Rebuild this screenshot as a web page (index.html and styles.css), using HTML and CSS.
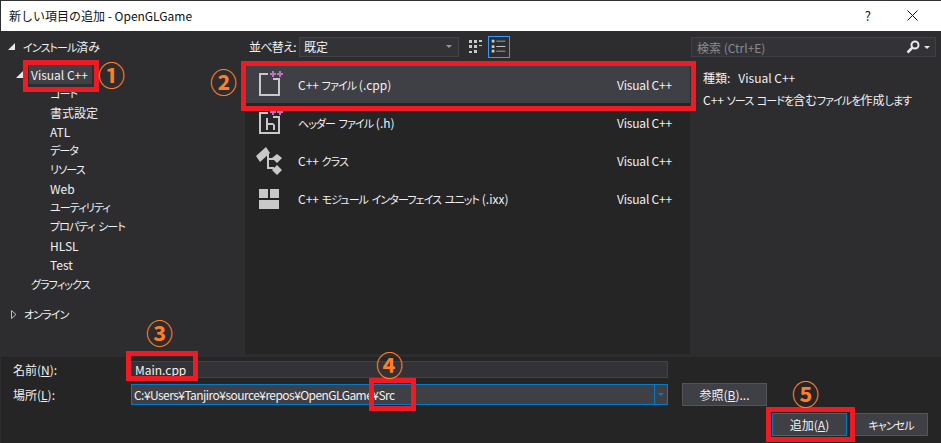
FILE: index.html
```html
<!DOCTYPE html>
<html lang="ja">
<head>
  <meta charset="UTF-8" />
  <title>新しい項目の追加 - OpenGLGame</title>
  <link rel="stylesheet" href="styles.css">
</head>
<body>
  <div class="dialog">
    <div class="titlebar">
      <span class="title">新しい項目の追加 - OpenGLGame</span>
      <span class="help">?</span>
      <svg class="close" width="11" height="11" viewBox="0 0 11 11"><path d="M.5.5l10 10M10.5.5l-10 10" stroke="#111" fill="none"/></svg>
    </div>

    <div class="main">
      <div class="tree">
        <div class="node top"><span class="tri open"></span><span><span class="kana">インストール</span>済み</span></div>
        <div class="node second"><span class="tri open small"></span><span class="picked">Visual C++</span></div>
        <ul class="leaves">
          <li class="kana">コード</li>
          <li>書式設定</li>
          <li>ATL</li>
          <li class="kana">データ</li>
          <li class="kana">リソース</li>
          <li>Web</li>
          <li class="kana">ユーティリティ</li>
          <li class="kana">プロパティ シート</li>
          <li>HLSL</li>
          <li>Test</li>
        </ul>
        <div class="node graphics kana">グラフィックス</div>
        <div class="node online">
          <svg class="shut" width="6" height="9" viewBox="0 0 6 9"><path d="M.5.5v8l4.500-4z" fill="none" stroke="#bbb"/></svg>
          <span class="kana">オンライン</span>
        </div>
      </div>

      <div class="center">
        <div class="sortbar">
          <label>並べ替え:</label>
          <div class="sortbox">既定<span class="drop"></span></div>
          <svg class="viewbtn" width="20" height="22" viewBox="0 0 20 22" fill="#c8c8c8">
            <path d="M3 4h3v3H3zM8 4h3v3H8zM13 4h3v2h-3zM3 9h3v3H3zM8 9h3v3H8zM13 9h3v1h-3zM3 15h3v2H3zM8 14h3v3H8z"/>
          </svg>
          <svg class="viewbtn on" width="22" height="22" viewBox="0 0 22 22" fill="#c8c8c8">
            <path d="M3 3h3v3H3zM8 4h10v1H8zM3 9h3v3H3zM8 10h10v1H8zM3 14h3v3H3zM8 15h10v1H8z"/>
          </svg>
        </div>
        <div class="list">
          <div class="row active">
            <svg class="ico" width="32" height="32" viewBox="0 0 32 32">
              <path d="M15 6H7v21h19V11h-6" fill="none" stroke="#c8c8c8" stroke-width="2"/>
              <path d="M17 6h6M20 3v6M24 6h6M27 3v6" stroke="#c070c0" stroke-width="2" fill="none"/>
            </svg>
            <span class="name">C++ <span class="kana">ファイル</span> (.cpp)</span><span class="kind">Visual C++</span>
          </div>
          <div class="row">
            <svg class="ico" width="32" height="32" viewBox="0 0 32 32">
              <path d="M15 7H7v20h19V11h-6" fill="none" stroke="#c8c8c8" stroke-width="2"/>
              <path d="M17 6h6M20 3v6M24 6h6M27 3v6" stroke="#c070c0" stroke-width="2" fill="none"/>
              <path d="M13 12h2v5h5l2 2v5h-2v-5h-5v5h-2z" fill="#c8c8c8"/>
            </svg>
            <span class="name"><span class="kana">ヘッダー ファイル</span> (.h)</span><span class="kind">Visual C++</span>
          </div>
          <div class="row">
            <svg class="ico" width="32" height="32" viewBox="0 0 32 32">
              <path d="M13 3l4 6-10 9-4-6z" fill="#c8c8c8"/>
              <path d="M14 10h2v4h5v2h-5v7h5v2h-7z" fill="#c8c8c8"/>
              <path d="M24 10l5 4-5 5-5-5zM24 21l5 5-5 5-5-5z" fill="#c8c8c8"/>
            </svg>
            <span class="name">C++ <span class="kana">クラス</span></span><span class="kind">Visual C++</span>
          </div>
          <div class="row">
            <svg class="ico" width="32" height="32" viewBox="0 0 32 32">
              <path d="M6 7h9v9H6zM17 7h9v9h-9zM6 18h20v9H6z" fill="#c8c8c8"/>
            </svg>
            <span class="name">C++ <span class="kana">モジュール インターフェイス ユニット</span> (.ixx)</span><span class="kind">Visual C++</span>
          </div>
        </div>
      </div>

      <div class="side">
        <div class="search">
          <span class="hint">検索 (Ctrl+E)</span>
          <svg width="14" height="14" viewBox="0 0 14 14"><circle cx="9" cy="5" r="3.500" fill="none" stroke="#e8e8e8" stroke-width="2"/><path d="M6.500 7.500L1.500 12.500" stroke="#e8e8e8" stroke-width="2.500"/></svg>
          <span class="drop light"></span>
        </div>
        <div class="info">
          <p><span class="infolabel">種類:</span>Visual C++</p>
          <p>C++ <span class="kana">ソース コードを</span>含む<span class="kana">ファイルを</span>作成<span class="kana">します</span></p>
        </div>
      </div>
    </div>

    <div class="form">
      <div class="fields">
        <div class="field">
          <label>名前(<u>N</u>):</label>
          <div class="input">Main.cpp</div>
        </div>
        <div class="field">
          <label>場所(<u>L</u>):</label>
          <div class="input focused"><span class="path">C:¥Users¥Tanjiro¥source¥repos¥OpenGLGame¥Src</span><span class="combo"><span class="drop blue"></span></span></div>
          <button class="btn browse">参照(<u>B</u>)...</button>
        </div>
      </div>
      <div class="actions">
        <button class="btn primary">追加(<u>A</u>)</button>
        <button class="btn"><span class="kana">キャンセル</span></button>
      </div>
    </div>

    <!-- red marks and numbers drawn over the screenshot -->
    <div class="mark m1"></div>
    <div class="mark m2"></div>
    <div class="mark m3"></div>
    <div class="mark m4"></div>
    <div class="mark m5"></div>
    <span class="num n1">①</span>
    <span class="num n2">②</span>
    <span class="num n3">③</span>
    <span class="num n4">④</span>
    <span class="num n5">⑤</span>
  </div>
</body>
</html>
```

FILE: styles.css
```css
* { margin: 0; padding: 0; box-sizing: border-box; }
html, body { height: 100%; overflow: hidden; }
body {
  font-family: "Noto Sans CJK JP", "Open Sans", sans-serif;
  font-size: 12px;
  font-feature-settings: "palt";
  color: #f1f1f1;
  background: #252526;
}
u { text-underline-offset: 1px; }
/* the screenshot's UI font has much narrower kana */
.kana { font-size: 11px; letter-spacing: -0.9px; word-spacing: 2px; }

.dialog {
  position: relative;
  width: 941px;
  height: 443px;
  display: flex;
  flex-direction: column;
  border-left: 1px solid #2d2d30;
}

.titlebar {
  height: 31px;
  flex: none;
  background: #fff;
  border-top: 1px solid #333;
  color: #111;
  display: flex;
  align-items: center;
  padding: 0 23px 2px 8px;
  font-feature-settings: normal;
}
.title { flex: 1; }
.help { margin-right: 36px; font-size: 13px; }

.main { display: flex; height: 326px; flex: none; background: #2d2d30; }

.tree { width: 244px; flex: none; padding-top: 4px; }
.node { display: flex; align-items: center; height: 22px; }
.top { padding-left: 7px; }
.second { padding-left: 15px; margin-top: 6px; }
.picked { background: #3f3f46; padding: 0 4px 0 2px; height: 19px; line-height: 19px; margin-left: 6px; }
.tri { width: 0; height: 0; flex: none; }
.tri.open { border-left: 7px solid transparent; border-bottom: 7px solid #e8e8e8; margin-right: 8px; }
.tri.small { margin-right: 0; }
.shut { margin-right: 7px; flex: none; }
.leaves { list-style: none; padding-left: 49px; }
.leaves li { height: 19px; line-height: 19px; }
.second + .leaves { margin-top: -1px; }
.graphics { padding-left: 30px; height: 19px; }
.online { padding-left: 10px; margin-top: 10px; }

.center { width: 445px; flex: none; display: flex; flex-direction: column; }
.sortbar { height: 31px; flex: none; display: flex; align-items: center; padding-left: 4px; }
.sortbar label { width: 50px; flex: none; white-space: nowrap; letter-spacing: -0.7px; }
.sortbox {
  width: 160px;
  height: 20px;
  line-height: 18px;
  padding-left: 4px;
  border: 1px solid #434346;
  background: #333337;
  display: flex;
  align-items: center;
  justify-content: space-between;
  padding-right: 6px;
  margin-right: 7px;
}
.drop { width: 0; height: 0; border-left: 3px solid transparent; border-right: 3px solid transparent; border-top: 3px solid #999; }
.viewbtn { margin-right: 2px; flex: none; }
.viewbtn.on { border: 1px solid #3399ff; }
.list { height: 292px; background: #252526; padding-top: 3px; }
.row { height: 38px; display: flex; align-items: center; padding-right: 18px; }
.row.active { background: #3f3f46; }
.ico { margin: 0 13px 0 8px; flex: none; }
.name { flex: 1; }
.kind { letter-spacing: -0.2px; }

.side { flex: 1; }
.search {
  height: 20px;
  margin: 6px 5px 5px 1px;
  background: #333337;
  border: 1px solid #3f3f46;
  display: flex;
  align-items: center;
  padding: 0 5px;
  gap: 4px;
}
.hint { flex: 1; color: #8a8a8a; }
.drop.light { border-top-color: #e8e8e8; }
.info { padding: 5px 0 0 13px; }
.info p { height: 22px; line-height: 22px; white-space: nowrap; }
.infolabel { margin-right: 8px; }

.form { flex: 1; position: relative; display: flex; flex-direction: column; padding: 4px 0 0 12px; }
.fields { display: flex; flex-direction: column; gap: 5px; }
.field { display: flex; align-items: center; }
.field label { width: 118px; flex: none; }
.input {
  width: 537px;
  height: 17px;
  line-height: 15px;
  background: #333337;
  border: 1px solid #434346;
  padding-left: 3px;
  position: relative;
}
.input.focused { height: 21px; line-height: 19px; border-color: #007acc; background: #3f3f46; padding-left: 2px; }
.path { letter-spacing: -0.55px; }
.combo { position: absolute; right: 0; top: 0; width: 13px; height: 19px; border-left: 1px solid #007acc; display: flex; align-items: center; justify-content: center; }
.drop.blue { border-top-color: #007acc; }

.btn {
  font: inherit;
  font-feature-settings: inherit;
  color: #f1f1f1;
  height: 23px;
  background: #3f3f46;
  border: 1px solid #555;
}
.browse { width: 85px; margin-left: 14px; }
.actions { display: flex; justify-content: flex-end; gap: 7px; padding: 7px 13px 0 0; }
.actions .btn { width: 74px; }
.actions .primary { width: 75px; border-color: #007acc; }

.mark { position: absolute; border: 5px solid #ed1c24; }
.m1 { left: 22px; top: 60px; width: 76px; height: 32px; }
.m2 { left: 240px; top: 61px; width: 455px; height: 50px; }
.m3 { left: 125px; top: 351px; width: 72px; height: 30px; }
.m4 { left: 368px; top: 378px; width: 47px; height: 33px; }
.m5 { left: 765px; top: 407px; width: 89px; height: 35px; }
.num { position: absolute; color: #ff7f27; font-size: 27px; font-weight: 700; line-height: 30px; }
.n1 { left: 97px; top: 60px; }
.n2 { left: 209px; top: 67px; }
.n3 { left: 145px; top: 318px; }
.n4 { left: 375px; top: 350px; }
.n5 { left: 791px; top: 379px; }
```
